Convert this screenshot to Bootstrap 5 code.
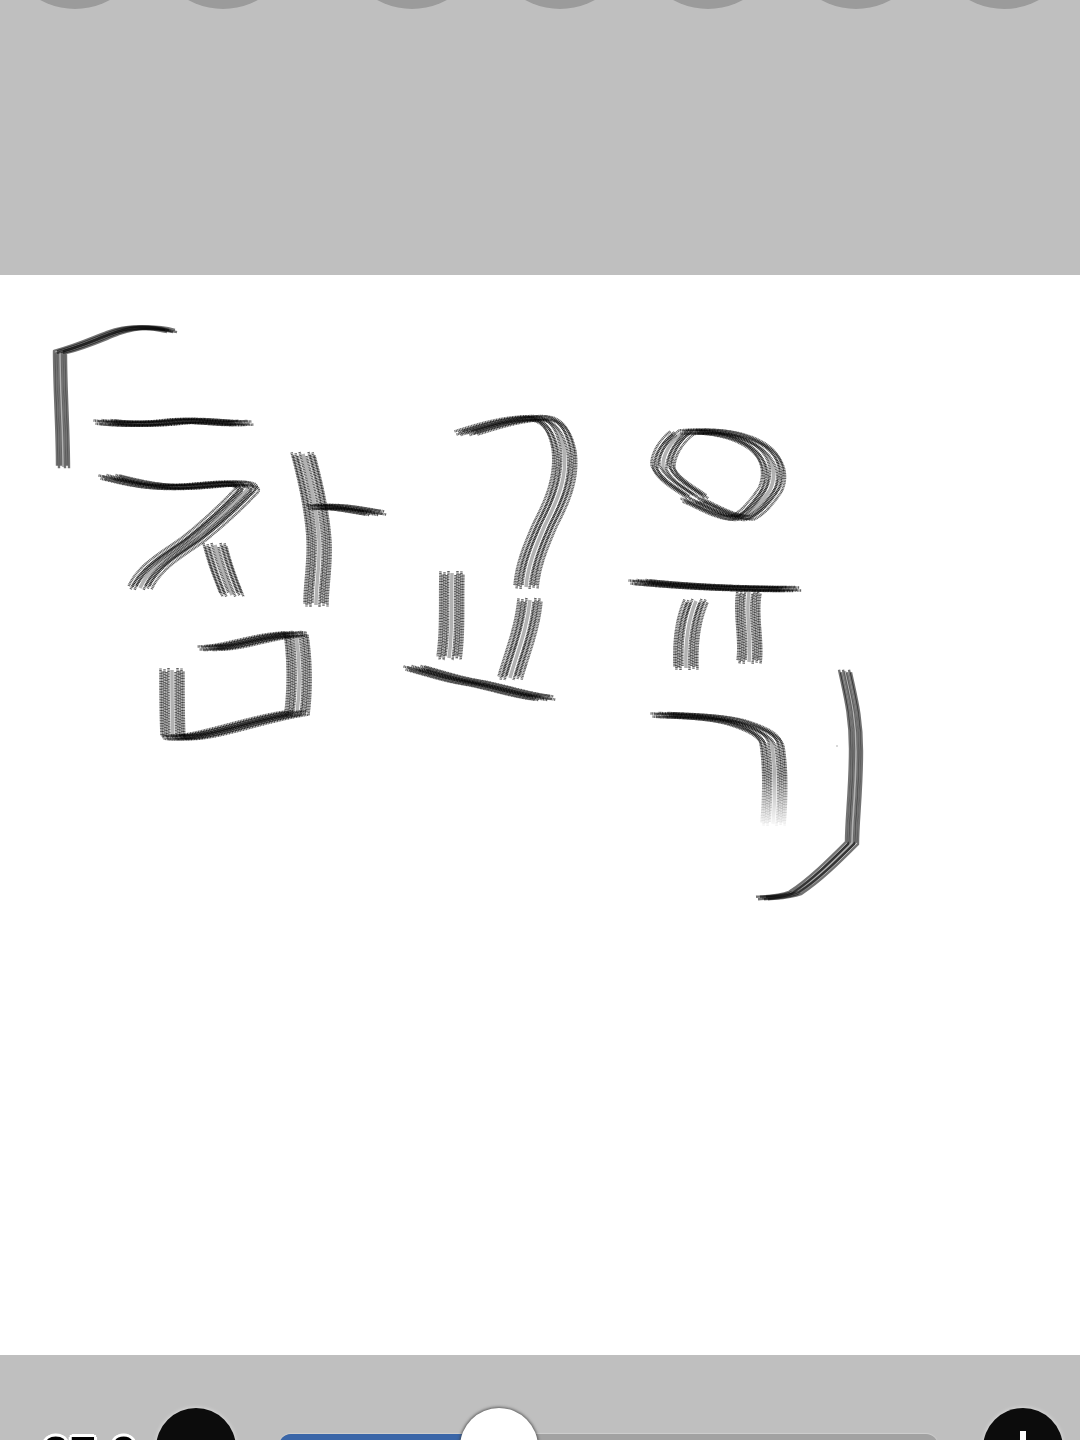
<!DOCTYPE html>
<html lang="ko">
<head>
<meta charset="utf-8">
<title>참교육</title>
<link href="https://cdn.jsdelivr.net/npm/bootstrap@5.3.0/dist/css/bootstrap.min.css" rel="stylesheet">
<style>
html,body{height:1440px;overflow:hidden;background:#fff}
.screen{height:1440px}
.top-panel{height:275px;background:#bfbfbf;overflow:hidden;padding-left:3px;gap:4px}
.tool-dot{width:144px;height:144px;margin-top:-135px;border-radius:50%;background:#9b9b9b;flex:none}
.tool-dot-apart{margin-left:41px}
.sheet{display:block;width:1080px;height:1080px;flex:none;background:#fff}
.bottom-panel{height:85px;background:#bfbfbf;overflow:hidden;padding-top:53px}
.size-value{width:156px;padding-left:42px;margin-top:21px;font:400 49px/1 "Liberation Sans",sans-serif;color:#000;text-shadow:-2px -2px 0 #fff,2px -2px 0 #fff,0 -3px 0 #fff,-3px 0 0 #fff,3px 0 0 #fff;white-space:nowrap}
.round-key{width:80px;height:80px;flex:none;padding:0;border:0;background:#0c0c0c;box-shadow:0 0 4px rgba(255,255,255,.6)}
.round-key:hover{background:#0c0c0c}
.plus-key::before{content:"";position:absolute;left:37px;top:23px;width:6px;height:34px;background:#fff}
.plus-key::after{content:"";position:absolute;left:23px;top:37px;width:34px;height:6px;background:#fff}
.slider-wrap{width:659px;margin:26px 45px 0 43px;flex:none}
.slider-wrap .progress{height:40px;border-radius:12px;background:#a2a2a2;box-shadow:0 -1px 1px rgba(255,255,255,.25)}
.slider-wrap .progress-bar{background:#3a66a8}
.slider-thumb{position:absolute;left:181px;top:-26px;width:78px;height:78px;border-radius:50%;background:#fff;box-shadow:0 0 3px 1px rgba(60,60,60,.75)}
.ink{fill:none;stroke-linecap:butt;stroke-linejoin:round}
.ink-wide{stroke:#000;stroke-opacity:.62;stroke-width:2.5;stroke-dasharray:1.1 .5}
.ink-wide-pale{stroke:#000;stroke-opacity:.3;stroke-width:3.5}
.ink-thin{stroke:#000;stroke-opacity:.55;stroke-width:2.4}
.ink-thin-pale{stroke:#000;stroke-opacity:.3;stroke-width:2.4}
</style>
</head>
<body>
<div class="screen d-flex flex-column">
  <div class="top-panel d-flex align-items-start">
    <span class="tool-dot"></span>
    <span class="tool-dot"></span>
    <span class="tool-dot tool-dot-apart"></span>
    <span class="tool-dot"></span>
    <span class="tool-dot"></span>
    <span class="tool-dot"></span>
    <span class="tool-dot"></span>
  </div>

  <svg class="sheet" viewBox="0 275 1080 1080" role="img" aria-label="손으로 그린 붓글씨 그림">
    <defs>
      <filter id="soft" x="-5%" y="-5%" width="110%" height="110%"><feGaussianBlur stdDeviation=".7"/></filter>
      <linearGradient id="fade" x1="0" y1="0" x2="0" y2="1"><stop offset="0" stop-color="#fff" stop-opacity="0"/><stop offset="1" stop-color="#fff" stop-opacity=".95"/></linearGradient>
      <g id="wide-brush">
        <path d="M105 422C130 425 160 424 180 421C205 420 225 424 242 423"/>
        <path d="M110 477C130 482 150 487 175 487C200 487 225 482 240 484C247 485 249 488 246 491C235 503 215 522 195 538C175 553 150 565 140 588"/>
        <path d="M215 545C220 565 226 580 232 595"/>
        <path d="M303 454C310 480 317 510 319 540C320 565 316 585 316 605"/>
        <path d="M318 507C340 506 355 510 375 513"/>
        <path d="M172 670C172 690 172 715 173 737C200 741 250 720 297 713C300 690 300 660 296 634C260 636 235 648 209 648"/>
        <path d="M466 433C485 427 510 419 535 418C552 418 560 430 564 450C568 480 555 505 545 525C535 548 528 565 526 587"/>
        <path d="M452 573C451 600 453 630 449 658"/>
        <path d="M530 600C527 630 518 650 510 678"/>
        <path d="M415 668C440 675 455 680 475 683C500 688 520 695 544 698"/>
        <path d="M690 432C715 430 745 435 762 450C775 462 776 478 770 490C762 502 752 514 742 518C725 518 705 505 692 500"/>
        <path d="M682 433C672 440 662 455 663 467C668 480 685 488 697 497"/>
        <path d="M640 582C670 585 720 589 790 589"/>
        <path d="M696 601C688 620 685 640 686 668"/>
        <path d="M749 592C745 615 752 640 749 662"/>
        <path d="M662 715C690 716 715 717 735 722C755 728 770 735 772 745C776 770 775 800 773 824"/>
      </g>
      <g id="thin-brush">
        <path d="M63 467C63 430 60 390 60 352C80 347 95 340 113 333C130 327 150 326 171 331"/>
        <path d="M845 671C850 695 856 715 856 750C856 790 852 820 852 843C835 860 815 880 795 893C785 897 775 897 762 898"/>
      </g>
    </defs>
    <g class="ink" filter="url(#soft)">
      <g class="ink-wide-pale"><use href="#wide-brush"/></g>
      <g class="ink-wide">
        <use href="#wide-brush" x="-11.5" y="-1.6"/>
        <use href="#wide-brush" x="-9.5" y="1.6"/>
        <use href="#wide-brush" x="-7.5" y="-.8"/>
        <use href="#wide-brush" x="-5.5" y="2"/>
        <use href="#wide-brush" x="-3.5" y="-2"/>
        <use href="#wide-brush" x="3.5" y="2"/>
        <use href="#wide-brush" x="5.5" y="-2"/>
        <use href="#wide-brush" x="7.5" y=".8"/>
        <use href="#wide-brush" x="9.5" y="-1.6"/>
        <use href="#wide-brush" x="11.5" y="1.6"/>
      </g>
      <g class="ink-thin-pale"><use href="#thin-brush"/></g>
      <g class="ink-thin">
        <use href="#thin-brush" x="-6" y="-1.2"/>
        <use href="#thin-brush" x="-4" y="1.2"/>
        <use href="#thin-brush" x="-2" y="-1.2"/>
        <use href="#thin-brush" x="2" y="1.2"/>
        <use href="#thin-brush" x="4" y="-1.2"/>
        <use href="#thin-brush" x="6" y="1.2"/>
      </g>
    </g>
    <rect x="752" y="775" width="46" height="52" fill="url(#fade)"/>
    <circle cx="837" cy="746" r="1" fill="#ccc"/>
  </svg>

  <div class="bottom-panel d-flex align-items-start">
    <div class="size-value">27.0</div>
    <button type="button" class="btn round-key rounded-circle position-relative" aria-label="줄이기"></button>
    <div class="slider-wrap position-relative">
      <div class="progress" role="progressbar" aria-valuenow="33" aria-valuemin="0" aria-valuemax="100">
        <div class="progress-bar" style="width:33%"></div>
      </div>
      <span class="slider-thumb"></span>
    </div>
    <button type="button" class="btn round-key plus-key rounded-circle position-relative" aria-label="늘리기"></button>
  </div>
</div>
<script src="https://cdn.jsdelivr.net/npm/bootstrap@5.3.0/dist/js/bootstrap.bundle.min.js"></script>
</body>
</html>
